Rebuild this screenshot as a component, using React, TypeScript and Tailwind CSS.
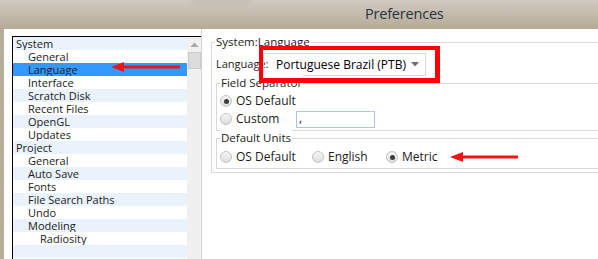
const systemItems = ['General', 'Language', 'Interface', 'Scratch Disk', 'Recent Files', 'OpenGL', 'Updates'];
const projectItems = ['General', 'Auto Save', 'Fonts', 'File Search Paths', 'Undo', 'Modeling'];

type Row = { label: string; indent: number; selected?: boolean };

const rows: Row[] = [
  { label: 'System', indent: 0 },
  ...systemItems.map((label) => ({ label, indent: 1, selected: label === 'Language' })),
  { label: 'Project', indent: 0 },
  ...projectItems.map((label) => ({ label, indent: 1 })),
  { label: 'Radiosity', indent: 2 },
  { label: '', indent: 0 },
  { label: '', indent: 0 },
];

function Radio({ checked }: { checked?: boolean }) {
  return (
    <span className="w-[12px] h-[12px] rounded-full border border-[#c4c4c4] bg-gradient-to-b from-[#f6f6f6] to-[#dedede] flex items-center justify-center shrink-0">
      {checked && <span className="w-[5px] h-[5px] rounded-full bg-[#3c3c3c]" />}
    </span>
  );
}

function RadioItem({ label, checked, width }: { label: string; checked?: boolean; width?: string }) {
  return (
    <div className={`flex items-center h-[12px] gap-[4px] ${width ?? ''}`}>
      <Radio checked={checked} />
      <span className="leading-[12px] whitespace-nowrap">{label}</span>
    </div>
  );
}

function GroupLabel({ children }: { children: string }) {
  return (
    <span className="absolute left-[3px] -top-[9px] bg-white px-[1px] leading-[16px] text-[11.5px]">{children}</span>
  );
}

function RedArrow({ length, className }: { length: number; className: string }) {
  return (
    <svg className={`absolute ${className}`} width={length} height={12} viewBox={`0 0 ${length} 12`}>
      <polygon points="0,6 13,1 13,11" fill="#f01414" />
      <rect x={12} y={4.5} width={length - 12} height={3} fill="#f01414" />
    </svg>
  );
}

export default function App() {
  return (
    <div className="relative w-[598px] h-[259px] overflow-hidden bg-[#b8ad9b] font-['Open_Sans',sans-serif] text-[11px] text-[#1b1b1b]">
      {/* title bar */}
      <div className="relative h-[29px] bg-gradient-to-b from-[#d1cac2] to-[#b6aa96] flex items-center">
        <span className="ml-[365px] -mt-[2px] text-[14.5px] text-[#27323d] tracking-[-0.2px]">Preferences</span>
        <span className="absolute left-[193px] top-0 w-[58px] h-[5px] bg-[#c3bcb3] blur-[2px]" />
      </div>

      <div className="flex h-[230px] pl-[4px]">
        <div className="flex-1 bg-white flex pt-[7px] pl-[8px]">
          {/* tree list */}
          <div className="flex border-l border-t border-black h-[240px]">
            <div className="w-[174px] flex flex-col">
              {rows.map((r, i) => (
                <div
                  key={i}
                  className={`h-[13px] leading-[13px] whitespace-nowrap ${
                    r.selected ? 'bg-[#3399ff]' : i % 2 === 0 ? 'bg-[#eaf2fb]' : 'bg-white'
                  } ${r.indent === 0 ? 'pl-[3px]' : r.indent === 1 ? 'pl-[15px]' : 'pl-[27px]'}`}
                >
                  {r.label}
                </div>
              ))}
            </div>
            <div className="w-[14px] bg-[#f0f0f0] flex flex-col items-center">
              <svg width="9" height="6" viewBox="0 0 9 6" className="mt-[5px]">
                <polygon points="4.5,0.5 8.5,5 0.5,5" fill="#a8a8a8" />
              </svg>
              <div className="mt-[4px] w-[13px] h-[17px] bg-[#dcdcdc] border border-[#cbcbcb]" />
            </div>
          </div>
          <div className="w-px bg-[#d2d2d2] -mt-[7px]" />

          {/* right panel */}
          <div className="ml-[9px] pt-[6px]">
            <div className="relative w-[420px] h-[131px] border border-[#d8d8d8] flex flex-col">
              <GroupLabel>System:Language</GroupLabel>
              <div className="flex items-center mt-[10px] h-[23px] pl-[4px]">
                <span className="w-[47px]">Language:</span>
                <div className="w-[163px] h-[23px] border border-[#d9d9d9] flex items-center pl-[12px] pr-[6px] text-[12px] text-black">
                  <span className="flex-1">Portuguese Brazil (PTB)</span>
                  <svg width="8" height="5" viewBox="0 0 8 5">
                    <polygon points="0,0 8,0 4,4.5" fill="#707070" />
                  </svg>
                </div>
              </div>

              <div className="relative ml-[4px] mt-[7px] h-[48px] border border-[#d8d8d8] pl-[3px] pt-[11px] flex flex-col gap-[6px] text-[12px]">
                <GroupLabel>Field Separator</GroupLabel>
                <RadioItem label="OS Default" checked />
                <div className="flex items-center h-[12px]">
                  <RadioItem label="Custom" width="w-[76px]" />
                  <div className="w-[79px] h-[17px] shrink-0 border border-[#a8c8e8] leading-[12px] pl-[2px]">,</div>
                </div>
              </div>

              <div className="relative ml-[4px] mt-[7px] h-[31px] border border-[#d8d8d8] pl-[3px] pt-[12px] flex items-start text-[12px]">
                <GroupLabel>Default Units</GroupLabel>
                <RadioItem label="OS Default" width="w-[92px]" />
                <RadioItem label="English" width="w-[74px]" />
                <RadioItem label="Metric" checked />
              </div>
            </div>
          </div>
        </div>
      </div>

      {/* annotations */}
      <div className="absolute left-[259px] top-[46px] w-[181px] h-[37px] border-[5px] border-l-[4px] border-t-[4px] border-[#ff0000]" />
      <RedArrow length={69} className="left-[111px] top-[61px]" />
      <RedArrow length={68} className="left-[450px] top-[151px]" />
    </div>
  );
}
